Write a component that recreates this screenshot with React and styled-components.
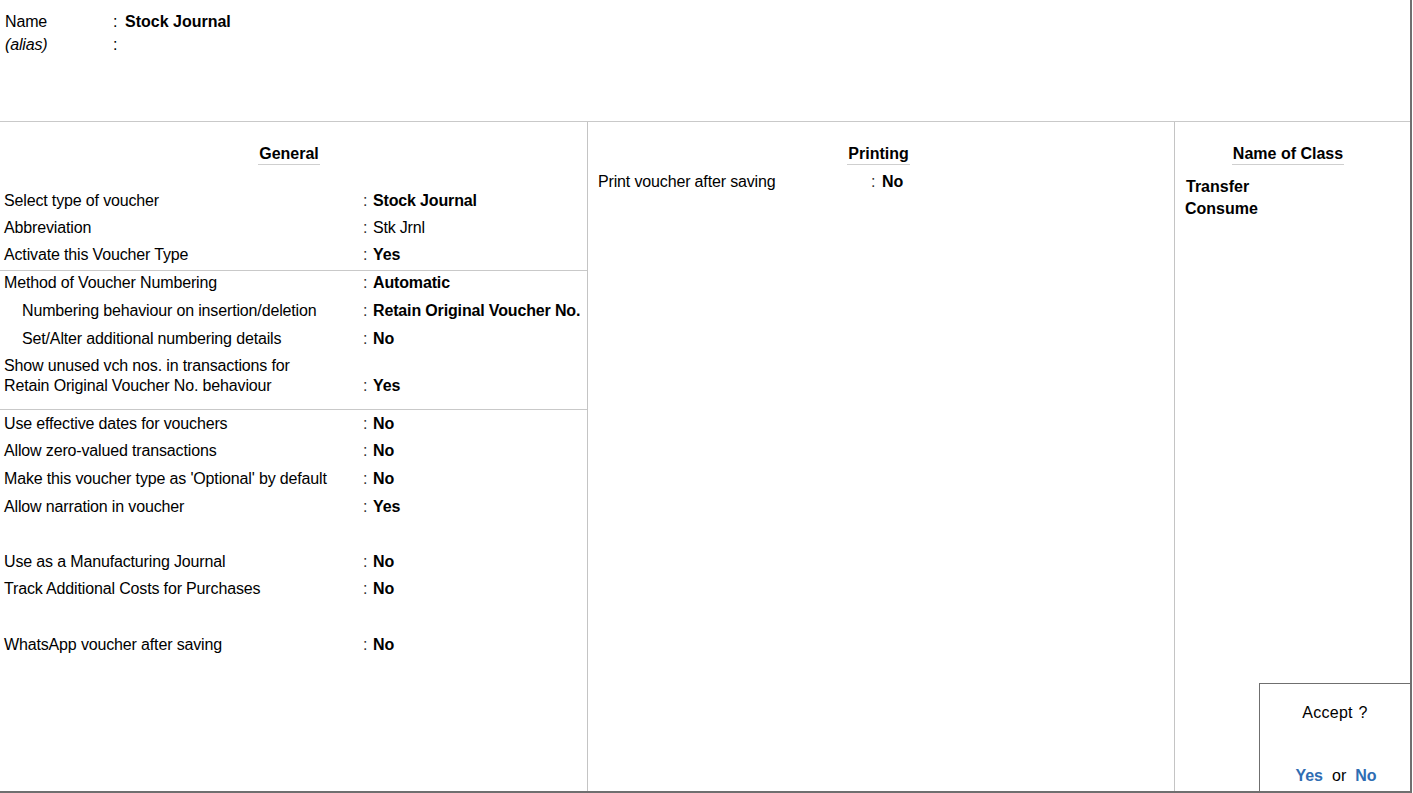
import React from "react";
import styled, { createGlobalStyle } from "styled-components";

const Global = createGlobalStyle`
  html, body { margin: 0; padding: 0; background: #fff; }
  body {
    font-family: "Liberation Sans", Arial, sans-serif;
    font-size: 16px;
    color: #000;
  }
  * { box-sizing: border-box; }
`;

const Frame = styled.div`
  position: relative;
  width: 1412px;
  height: 793px;
  border-right: 2px solid #6f6f6f;
  border-bottom: 2px solid #6f6f6f;
  display: flex;
  flex-direction: column;
  overflow: hidden;
`;

const Header = styled.div`
  height: 122px;
  border-bottom: 1px solid #c9c9c9;
  padding: 10px 0 0 5px;
  display: grid;
  grid-template-columns: 108px 12px auto;
  grid-auto-rows: 23px;
  align-content: start;
  letter-spacing: -0.15px;
`;

const HLabel = styled.div`
  font-style: ${(p) => (p.$italic ? "italic" : "normal")};
  line-height: 23px;
`;

const HColon = styled.div`
  line-height: 23px;
`;

const HValue = styled.div`
  font-weight: bold;
  letter-spacing: 0;
  line-height: 23px;
`;

const Body = styled.div`
  flex: 1;
  display: flex;
`;

const Column = styled.div`
  width: ${(p) => (p.$w ? `${p.$w}px` : "auto")};
  flex: ${(p) => (p.$w ? "none" : "1")};
  border-right: ${(p) => (p.$last ? "none" : "1px solid #c4c4c4")};
  display: flex;
  flex-direction: column;
`;

const HeadingWrap = styled.div`
  display: flex;
  justify-content: center;
  padding-top: 22px;
  padding-right: ${(p) => p.$shift || 0}px;
`;

const Heading = styled.div`
  font-weight: bold;
  line-height: 20px;
  border-bottom: 1px solid #cfcfcf;
  padding: 0 1px;
`;

const Group = styled.div`
  padding-top: ${(p) => p.$pt || 0}px;
  padding-bottom: ${(p) => p.$pb || 0}px;
  border-bottom: ${(p) => (p.$line ? "1px solid #c9c9c9" : "none")};
`;

const Row = styled.div`
  display: grid;
  grid-template-columns: ${(p) => p.$cols};
  align-items: center;
  height: ${(p) => p.$h}px;
  margin-top: ${(p) => p.$mt || 0}px;
  padding-left: ${(p) => p.$pl}px;
`;

const Label = styled.div`
  padding-left: ${(p) => (p.$indent ? 18 : 0)}px;
  letter-spacing: -0.15px;
  line-height: 20px;
  white-space: nowrap;
`;

const Colon = styled.div`
  line-height: 20px;
  color: #333;
  align-self: ${(p) => (p.$end ? "end" : "center")};
  padding-bottom: ${(p) => (p.$end ? 3 : 0)}px;
`;

const Value = styled.div`
  font-weight: ${(p) => (p.$bold ? "bold" : "normal")};
  letter-spacing: ${(p) => (p.$bold ? "-0.15px" : "-0.2px")};
  line-height: 20px;
  white-space: nowrap;
  align-self: ${(p) => (p.$end ? "end" : "center")};
  padding-bottom: ${(p) => (p.$end ? 3 : 0)}px;
`;

const ClassList = styled.div`
  padding: 11px 0 0 10px;
  display: flex;
  flex-direction: column;
`;

const ClassItem = styled.div`
  font-weight: bold;
  line-height: 22px;
  margin-left: ${(p) => p.$ml || 0}px;
`;

const AcceptBox = styled.div`
  position: absolute;
  right: 0;
  bottom: 0;
  width: 151px;
  height: 108px;
  border-top: 1px solid #6f6f6f;
  border-left: 1px solid #6f6f6f;
  background: #fff;
  display: flex;
  flex-direction: column;
  justify-content: space-between;
  align-items: center;
  padding: 19px 0 5px;
`;

const AcceptText = styled.div`
  line-height: 20px;
  letter-spacing: 0.3px;
  word-spacing: 1px;
`;

const Choices = styled.div`
  line-height: 20px;
  display: flex;
  gap: 9px;
  padding-left: 2px;
`;

const Choice = styled.span`
  color: #2f6db3;
  font-weight: bold;
`;

const Or = styled.span`
  color: #000;
`;

const GEN_COLS = "359px 10px auto";

const groups = [
  {
    pt: 22,
    pb: 2,
    line: true,
    rows: [
      { label: "Select type of voucher", value: "Stock Journal", bold: true, h: 27 },
      { label: "Abbreviation", value: "Stk Jrnl", bold: false, h: 27 },
      { label: "Activate this Voucher Type", value: "Yes", bold: true, h: 27 },
    ],
  },
  {
    pt: 0,
    pb: 10,
    line: true,
    rows: [
      { label: "Method of Voucher Numbering", value: "Automatic", bold: true, h: 23 },
      { label: "Numbering behaviour on insertion/deletion", value: "Retain Original Voucher No.", bold: true, h: 28, mt: 3, indent: true },
      { label: "Set/Alter additional numbering details", value: "No", bold: true, h: 28, indent: true },
      {
        label: ["Show unused vch nos. in transactions for", "Retain Original Voucher No. behaviour"],
        value: "Yes",
        bold: true,
        h: 46,
      },
    ],
  },
  {
    pt: 0,
    pb: 0,
    line: false,
    rows: [
      { label: "Use effective dates for vouchers", value: "No", bold: true, h: 27 },
      { label: "Allow zero-valued transactions", value: "No", bold: true, h: 28 },
      { label: "Make this voucher type as 'Optional' by default", value: "No", bold: true, h: 28 },
      { label: "Allow narration in voucher", value: "Yes", bold: true, h: 28 },
      { label: "Use as a Manufacturing Journal", value: "No", bold: true, h: 27, mt: 27 },
      { label: "Track Additional Costs for Purchases", value: "No", bold: true, h: 27 },
      { label: "WhatsApp voucher after saving", value: "No", bold: true, h: 28, mt: 29 },
    ],
  },
];

export default function App() {
  return (
    <>
      <Global />
      <Frame>
        <Header>
          <HLabel>Name</HLabel>
          <HColon>:</HColon>
          <HValue>Stock Journal</HValue>
          <HLabel $italic>(alias)</HLabel>
          <HColon>:</HColon>
          <HValue />
        </Header>
        <Body>
          <Column $w={588}>
            <HeadingWrap $shift={9}>
              <Heading>General</Heading>
            </HeadingWrap>
            {groups.map((g, gi) => (
              <Group key={gi} $pt={g.pt} $pb={g.pb} $line={g.line}>
                {g.rows.map((r, ri) => {
                  const multi = Array.isArray(r.label);
                  return (
                    <Row key={ri} $cols={GEN_COLS} $h={r.h} $mt={r.mt} $pl={4}>
                      <Label $indent={r.indent}>
                        {multi ? r.label.map((l, i) => <div key={i}>{l}</div>) : r.label}
                      </Label>
                      <Colon $end={multi}>:</Colon>
                      <Value $bold={r.bold} $end={multi}>{r.value}</Value>
                    </Row>
                  );
                })}
              </Group>
            ))}
          </Column>
          <Column $w={587}>
            <HeadingWrap $shift={5}>
              <Heading>Printing</Heading>
            </HeadingWrap>
            <Group $pt={4}>
              <Row $cols="273px 11px auto" $h={26} $pl={10}>
                <Label>Print voucher after saving</Label>
                <Colon>:</Colon>
                <Value $bold>No</Value>
              </Row>
            </Group>
          </Column>
          <Column $last>
            <HeadingWrap $shift={9}>
              <Heading>Name of Class</Heading>
            </HeadingWrap>
            <ClassList>
              <ClassItem $ml={1}>Transfer</ClassItem>
              <ClassItem>Consume</ClassItem>
            </ClassList>
          </Column>
        </Body>
        <AcceptBox>
          <AcceptText>Accept ?</AcceptText>
          <Choices>
            <Choice>Yes</Choice>
            <Or>or</Or>
            <Choice>No</Choice>
          </Choices>
        </AcceptBox>
      </Frame>
    </>
  );
}
